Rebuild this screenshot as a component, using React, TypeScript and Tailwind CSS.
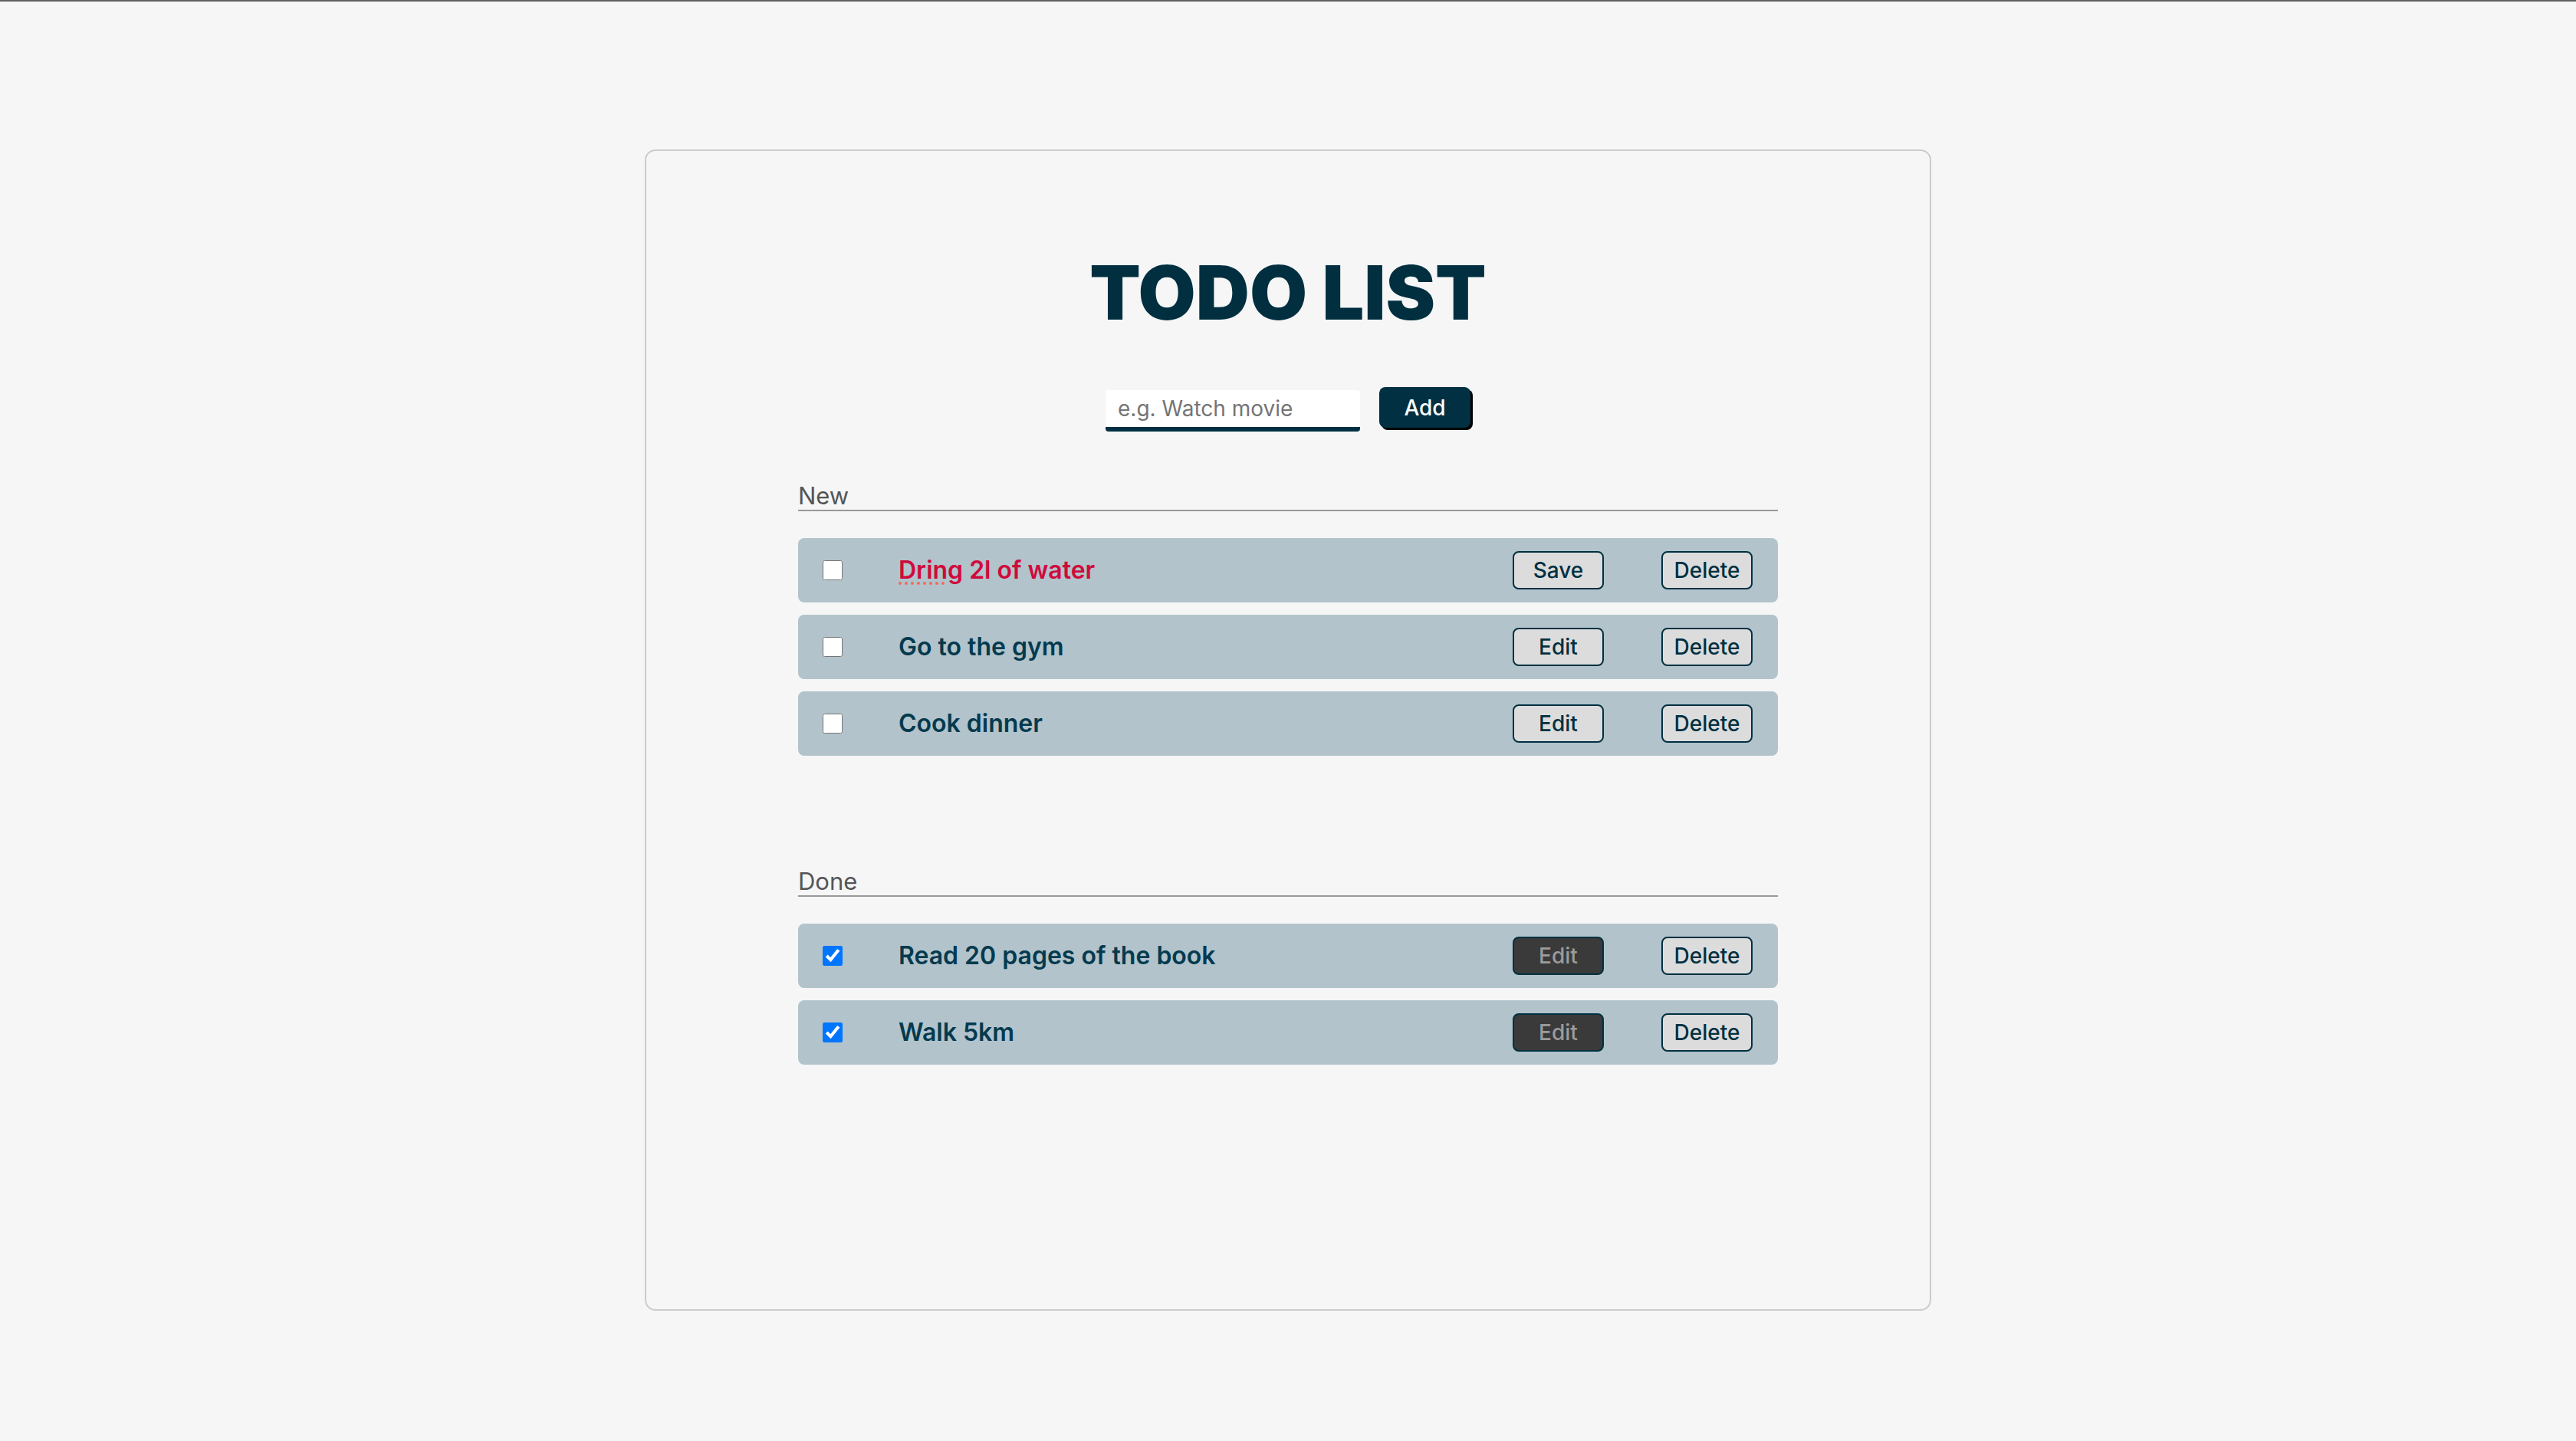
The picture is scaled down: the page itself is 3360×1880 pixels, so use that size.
import React from 'react';

type Todo = { id: number; title: string; done: boolean; editing?: boolean };

const todos: Todo[] = [
  { id: 1, title: 'Dring 2l of water', done: false, editing: true },
  { id: 2, title: 'Go to the gym', done: false },
  { id: 3, title: 'Cook dinner', done: false },
  { id: 4, title: 'Read 20 pages of the book', done: true },
  { id: 5, title: 'Walk 5km', done: true },
];

const TodoRow: React.FC<{ todo: Todo }> = ({ todo }) => {
  const [first, ...rest] = todo.title.split(' ');
  return (
    <div className="flex items-center h-[84px] rounded-[8px] bg-[#b2c3cb] pl-[32px] pr-[33px]">
      <input
        type="checkbox"
        defaultChecked={todo.done}
        className="w-[26px] h-[26px] m-0 shrink-0"
      />
      <div className="ml-[73px] flex-1 text-[32px] font-semibold leading-none">
        {todo.editing ? (
          <span className="text-[#cf0a3d]">
            <span className="underline decoration-dotted decoration-[#f26a5a] decoration-[4px] underline-offset-[4px]">
              {first}
            </span>{' '}
            {rest.join(' ')}
          </span>
        ) : (
          <span className="text-[#043a4f]">{todo.title}</span>
        )}
      </div>
      <button
        className={`w-[119px] h-[50px] rounded-[8px] border-2 border-[#003041] text-[28px] font-medium ${
          todo.done ? 'bg-[#3a3a3a] text-[#9b9b9b]' : 'bg-[#dcdcdc] text-[#003041]'
        }`}
      >
        {todo.editing ? 'Save' : 'Edit'}
      </button>
      <button className="ml-[75px] w-[119px] h-[50px] rounded-[8px] border-2 border-[#003041] bg-[#dcdcdc] text-[28px] font-medium text-[#003041]">
        Delete
      </button>
    </div>
  );
};

const Section: React.FC<{ label: string; items: Todo[]; className?: string }> = ({ label, items, className }) => (
  <div className={className}>
    <div className="text-[31px] leading-[36px] text-[#555] border-b-2 border-[#999]">{label}</div>
    <div className="mt-[35px] flex flex-col gap-[16px]">
      {items.map((t) => (
        <TodoRow key={t.id} todo={t} />
      ))}
    </div>
  </div>
);

export default function App() {
  return (
    <div className="min-h-screen bg-[#f6f6f6] font-['Inter',_'Noto_Sans',_sans-serif]">
      <div className="h-[2px] bg-[#606060]" />
      <div className="mx-auto mt-[193px] w-[1678px] h-[1515px] rounded-[14px] border-2 border-[#cccccc] px-[198px] pt-[136px]">
        <h1 className="text-center text-[97px] leading-none font-black text-[#022f40]">TODO LIST</h1>

        <div className="mt-[75px] flex justify-center items-start gap-[25px]">
          <input
            type="text"
            placeholder="e.g. Watch movie"
            className="mt-[4px] w-[332px] h-[54px] rounded-[4px] bg-white border-b-[6px] border-[#003041] pl-[16px] text-[28px] text-[#003041] placeholder:text-[#757575] outline-none"
          />
          <button className="w-[119px] h-[53px] rounded-[8px] bg-[#003041] text-white text-[28px] font-medium shadow-[3px_3px_0_#000]">
            Add
          </button>
        </div>

        <Section label="New" items={todos.filter((t) => !t.done)} className="mt-[66px]" />
        <Section label="Done" items={todos.filter((t) => t.done)} className="mt-[146px]" />
      </div>
    </div>
  );
}
